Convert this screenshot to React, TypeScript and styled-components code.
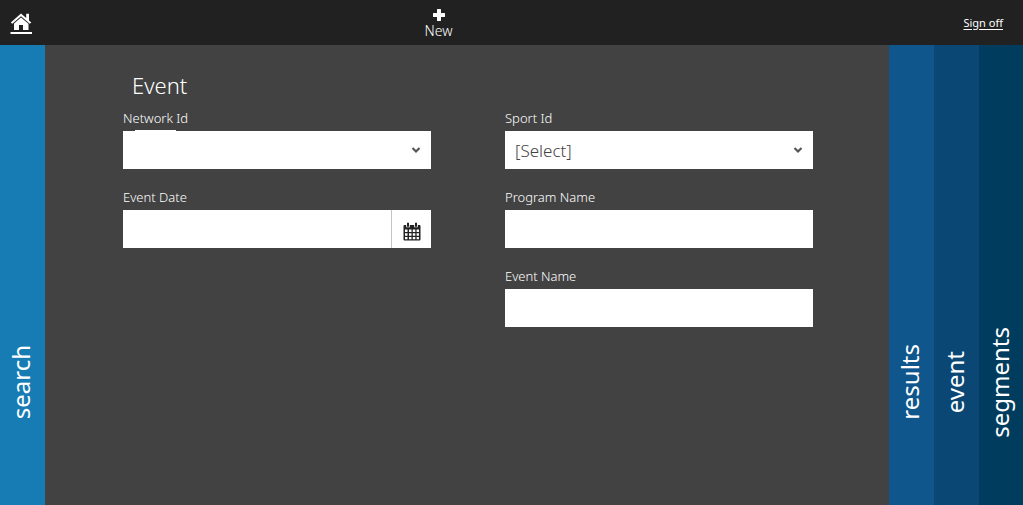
import React from "react";
import styled, { createGlobalStyle } from "styled-components";

const GlobalStyle = createGlobalStyle`
  *, *::before, *::after { box-sizing: border-box; }
  body {
    margin: 0;
    background: #424242;
    color: #fff;
    font-family: "Noto Sans", "Open Sans", sans-serif;
  }
  button, input, select { font-family: inherit; border-radius: 0; }
`;

const Page = styled.div`
  min-height: 100vh;
  display: flex;
  flex-direction: column;
`;

const TopBar = styled.header`
  height: 45px;
  flex: none;
  display: grid;
  grid-template-columns: 1fr auto 1fr;
  align-items: center;
  padding: 0 20px 0 10px;
  background: #212121;
`;

const HomeLink = styled.a`
  justify-self: start;
  display: flex;
  color: #fff;
`;

const NewButton = styled.button`
  display: flex;
  flex-direction: column;
  align-items: center;
  gap: 1px;
  padding: 4px 0 0;
  margin-right: 136px;
  border: 0;
  background: none;
  color: #fff;
  font-size: 14px;
  font-weight: 300;
  line-height: 18px;
  cursor: pointer;
`;

const SignOff = styled.a`
  justify-self: end;
  color: #fff;
  font-size: 11px;
  line-height: 16px;
  text-underline-offset: 2px;
`;

const Body = styled.div`
  flex: 1;
  display: flex;
`;

const Tab = styled.button<{ $color: string }>`
  flex: none;
  width: 45px;
  display: flex;
  align-items: center;
  justify-content: center;
  padding: 214px 3px 0 0;
  border: 0;
  background: ${(p) => p.$color};
  color: #fff;
  font-size: 24px;
  line-height: 32px;
  cursor: pointer;

  &:last-child {
    width: 44px;
  }
`;

const TabText = styled.span`
  writing-mode: vertical-rl;
  transform: rotate(180deg);
`;

const Panel = styled.main`
  flex: 1;
  min-width: 0;
  padding: 24px 76px 24px 78px;
`;

const Title = styled.h1`
  margin: 0 0 7px 9px;
  font-size: 22px;
  font-weight: 300;
  line-height: 32px;
`;

const Form = styled.form`
  display: grid;
  grid-template-columns: 1fr 1fr;
  gap: 74px;
  align-items: start;
`;

const Column = styled.div`
  display: flex;
  flex-direction: column;
  gap: 18px;
`;

const Field = styled.div`
  display: flex;
  flex-direction: column;
  gap: 3px;
`;

const Label = styled.label`
  font-size: 13px;
  font-weight: 300;
  line-height: 20px;
`;

const TextInput = styled.input`
  width: 100%;
  min-width: 0;
  height: 38px;
  padding: 0 10px;
  border: 0;
  background: #fff;
  color: #444;
  font-size: 17px;
`;

const SelectBox = styled.div<{ $tabbed?: boolean }>`
  position: relative;

  &::before {
    content: "";
    display: ${(p) => (p.$tabbed ? "block" : "none")};
    position: absolute;
    left: 12px;
    top: -1px;
    width: 41px;
    height: 1px;
    background: #fff;
  }
`;

const Select = styled.select`
  display: block;
  appearance: none;
  width: 100%;
  height: 38px;
  padding: 0 36px 0 10px;
  border: 0;
  background: #fff;
  color: #444;
  font-size: 17px;
  font-weight: 300;
`;

const Chevron = styled.svg`
  position: absolute;
  right: 10px;
  top: 15px;
  pointer-events: none;
`;

const DateBox = styled.div`
  display: flex;
`;

const DateButton = styled.button`
  flex: none;
  width: 40px;
  height: 38px;
  display: flex;
  align-items: center;
  justify-content: center;
  padding: 4px 0 0;
  border: 0;
  border-left: 1px solid #c4c4c4;
  background: #fff;
  cursor: pointer;
`;

const HomeIcon = () => (
  <svg width="23" height="22" viewBox="0 0 23 22" fill="currentColor" aria-hidden="true">
    <path d="M11 1.500 0.800 10.400l1.500 1.400L11 4.200l8.800 7.600 1.500-1.400-2.300-2V1.800h-2.800v4.100z" />
    <path d="M11 5.500 4 11.500V18h5v-5h4v5h5.500v-6.300z" />
    <path d="M0.500 20h21.500v2H0.500z" />
  </svg>
);

const PlusIcon = () => (
  <svg width="12" height="12" viewBox="0 0 12 12" aria-hidden="true">
    <path
      d="M4.600 0h2.800q.6 0 .6.600V4h3.400q.6 0 .6.600v2.800q0 .6-.6.600H8v3.400q0 .6-.6.600H4.600q-.6 0-.6-.6V8H.6Q0 8 0 7.400V4.600Q0 4 .6 4H4V.6Q4 0 4.600 0z"
      fill="#fff"
    />
  </svg>
);

const CalendarIcon = () => (
  <svg width="18" height="19" viewBox="0 0 18 19" aria-hidden="true">
    <path
      d="M1.500 3h15a1 1 0 0 1 1 1v13.500a1 1 0 0 1-1 1h-15a1 1 0 0 1-1-1V4a1 1 0 0 1 1-1z"
      fill="#222"
    />
    <path d="M3.200 .3h3.600v5H3.200zM11.200 .3h3.600v5h-3.600z" fill="#fff" />
    <path d="M4 .8h2v4H4zM12 .8h2v4h-2z" fill="#222" />
    <path
      d="M2 7.500h2.500V10H2zM6 7.500h2.500V10H6zM9.800 7.500h2.500V10H9.800zM13.600 7.500H16V10h-2.400zM2 11.300h2.500v2.500H2zM6 11.300h2.500v2.500H6zM9.800 11.300h2.500v2.500H9.800zM13.600 11.300H16v2.500h-2.400zM2 15h2.500v2.200H2zM6 15h2.500v2.200H6zM9.800 15h2.500v2.200H9.800zM13.600 15H16v2.200h-2.400z"
      fill="#fff"
    />
  </svg>
);

type DropdownProps = { id: string; placeholder: string; tabbed?: boolean };

const Dropdown = ({ id, placeholder, tabbed }: DropdownProps) => (
  <SelectBox $tabbed={tabbed}>
    <Select id={id} defaultValue="">
      <option value="">{placeholder}</option>
    </Select>
    <Chevron width="10" height="8" viewBox="0 0 10 8" aria-hidden="true">
      <path d="M1.500 2 5 5.500 8.500 2" fill="none" stroke="#555" strokeWidth="2.200" />
    </Chevron>
  </SelectBox>
);

const SideTab = ({ label, color }: { label: string; color: string }) => (
  <Tab type="button" $color={color}>
    <TabText>{label}</TabText>
  </Tab>
);

export default function App() {
  return (
    <Page>
      <GlobalStyle />
      <TopBar>
        <HomeLink href="#home" aria-label="Home">
          <HomeIcon />
        </HomeLink>
        <NewButton type="button">
          <PlusIcon />
          New
        </NewButton>
        <SignOff href="#signoff">Sign off</SignOff>
      </TopBar>
      <Body>
        <SideTab label="search" color="#177bb4" />
        <Panel>
          <Title>Event</Title>
          <Form>
            <Column>
              <Field>
                <Label htmlFor="network">Network Id</Label>
                <Dropdown id="network" placeholder="" tabbed />
              </Field>
              <Field>
                <Label htmlFor="date">Event Date</Label>
                <DateBox>
                  <TextInput id="date" type="text" />
                  <DateButton type="button" aria-label="Pick a date">
                    <CalendarIcon />
                  </DateButton>
                </DateBox>
              </Field>
            </Column>
            <Column>
              <Field>
                <Label htmlFor="sport">Sport Id</Label>
                <Dropdown id="sport" placeholder="[Select]" />
              </Field>
              <Field>
                <Label htmlFor="program">Program Name</Label>
                <TextInput id="program" type="text" />
              </Field>
              <Field>
                <Label htmlFor="event">Event Name</Label>
                <TextInput id="event" type="text" />
              </Field>
            </Column>
          </Form>
        </Panel>
        <SideTab label="results" color="#0f568c" />
        <SideTab label="event" color="#0a4774" />
        <SideTab label="segments" color="#003c5e" />
      </Body>
    </Page>
  );
}
